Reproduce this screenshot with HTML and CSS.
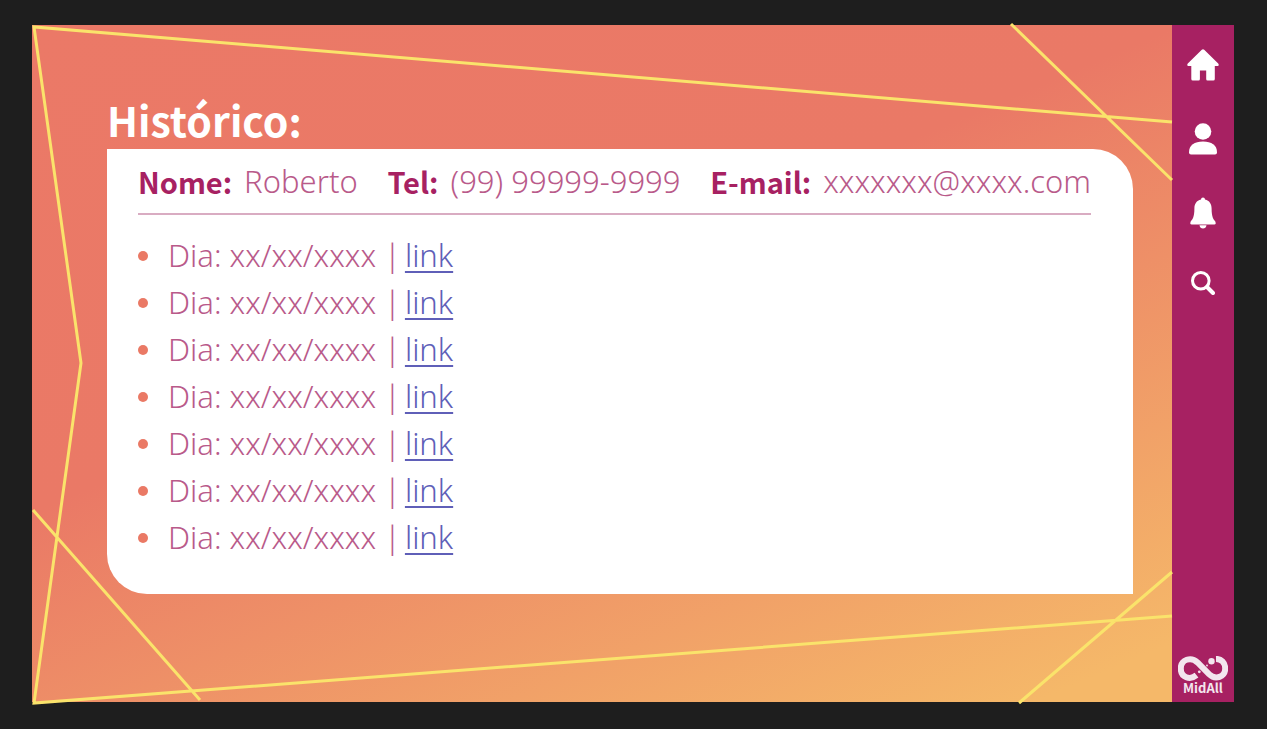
FILE: index.html
```html
<!DOCTYPE html>
<html lang="pt-BR">
<head>
  <meta charset="utf-8">
  <meta name="viewport" content="width=device-width, initial-scale=1">
  <title>MidAll – Histórico</title>
  <link rel="stylesheet" href="styles.css">
</head>
<body>
  <div class="app">
    <main class="content">
      <svg class="backdrop" viewBox="0 0 1140 677" preserveAspectRatio="none" aria-hidden="true">
        <path d="M1140 97 2 2 49 338 2 678 1140 591M979 -1 1140 155M1 485 168 675M987 678 1140 547"/>
      </svg>
      <h1 class="title">Histórico:</h1>
      <section class="card">
        <dl class="person">
          <div class="field"><dt>Nome:</dt><dd>Roberto</dd></div>
          <div class="field"><dt>Tel:</dt><dd>(99) 99999-9999</dd></div>
          <div class="field"><dt>E-mail:</dt><dd>xxxxxxx@xxxx.com</dd></div>
        </dl>
        <ul class="history">
          <li><span>Dia: xx/xx/xxxx |</span> <a href="#dia-1">link</a></li>
          <li><span>Dia: xx/xx/xxxx |</span> <a href="#dia-2">link</a></li>
          <li><span>Dia: xx/xx/xxxx |</span> <a href="#dia-3">link</a></li>
          <li><span>Dia: xx/xx/xxxx |</span> <a href="#dia-4">link</a></li>
          <li><span>Dia: xx/xx/xxxx |</span> <a href="#dia-5">link</a></li>
          <li><span>Dia: xx/xx/xxxx |</span> <a href="#dia-6">link</a></li>
          <li><span>Dia: xx/xx/xxxx |</span> <a href="#dia-7">link</a></li>
        </ul>
      </section>
    </main>
    <nav class="sidebar" aria-label="Menu">
      <div class="menu">
        <a class="item" href="#inicio" aria-label="Início">
          <svg viewBox="0 0 32 32" aria-hidden="true"><path d="M14.800 .8Q16 -.3 17.200 .8L31.200 14.500Q32.600 16.600 30.500 16.900H27.800V30Q27.800 31.500 26.300 31.500H20.500Q19.200 31.500 19.200 30V21.500H12.900V30Q12.900 31.500 11.600 31.500H5.800Q4.300 31.500 4.300 30V16.900H1.500Q-.6 16.600 .8 14.500Z"/></svg>
        </a>
        <a class="item" href="#perfil" aria-label="Perfil">
          <svg viewBox="0 0 32 32" aria-hidden="true"><circle cx="16" cy="8.500" r="8.300"/><path d="M2 29.500C2 22 7.500 18.600 16 18.600S30 22 30 29.500Q30 31.600 28 31.600H4Q2 31.600 2 29.500Z"/></svg>
        </a>
        <a class="item" href="#avisos" aria-label="Notificações">
          <svg viewBox="0 0 32 32" aria-hidden="true"><path d="M14 2.500a2 2 0 0 1 4 0C22.500 3.500 24.600 7 24.600 11.500 24.600 20 26.500 22.500 28.200 24.200Q29.600 27.500 27.300 27.500H4.700Q2.400 27.500 3.800 24.200C5.500 22.500 7.400 20 7.400 11.500 7.400 7 9.500 3.500 14 2.500ZM12.500 28.200H19.500Q18.900 31.500 16 31.500T12.500 28.200Z"/></svg>
        </a>
        <a class="item item-search" href="#buscar" aria-label="Buscar">
          <svg viewBox="0 0 24 24" aria-hidden="true"><circle cx="9.800" cy="9.800" r="8.300"/><path d="M16 16 22 22" stroke-width="4"/></svg>
        </a>
      </div>
      <a class="brand" href="#midall">
        <svg viewBox="0 0 50 25" aria-hidden="true">
          <path class="loop" d="M18.500 19.200C12 24.500 2.800 21.500 2.800 12.500 2.800 3.500 13 .2 19.500 6.500L31 18.200C37.500 24.500 47.200 21 47.200 12.500 47.200 6.500 43 2.800 38 2.900"/>
          <circle cx="33.500" cy="5.200" r="3.200"/><circle cx="29" cy="9.500" r=".9"/><circle cx="21.300" cy="15.800" r="1.400"/>
        </svg>
        <span>MidAll</span>
      </a>
    </nav>
  </div>
</body>
</html>
```
FILE: styles.css
```css
* {
  box-sizing: border-box;
}

body {
  margin: 0;
  min-height: 100vh;
  padding: 25px 33px 27px 32px;
  display: flex;
  background: #1e1e1e;
  font-family: "Noto Sans", sans-serif;
}

.app {
  flex: 1;
  display: flex;
}

.content {
  position: relative;
  flex: 1;
  padding: 68px 39px 68px 75px;
  background: linear-gradient(157deg, #eb7967 0%, #ea7966 42%, #f5b869 95%);
}

.backdrop {
  position: absolute;
  inset: 0;
  width: 100%;
  height: 100%;
  overflow: visible;
  fill: none;
  stroke: #fae36b;
  stroke-width: 3;
}

.title {
  position: relative;
  margin: 0;
  padding-bottom: 4px;
  color: #fff;
  font-family: "Noto Sans CJK JP", sans-serif;
  font-size: 41px;
  font-weight: 600;
  line-height: 52px;
}

.card {
  position: relative;
  padding: 8px 42px 33px 31px;
  border-radius: 0 40px 0 40px;
  background: #fff;
  color: #b95a8a;
  font-size: 31px;
  font-weight: 300;
}

.person {
  display: flex;
  flex-wrap: wrap;
  justify-content: space-between;
  margin: 0;
  padding-bottom: 8px;
  border-bottom: 2px solid #d9acc2;
  line-height: 48px;
}

.field {
  display: flex;
  gap: 12px;
}

.field dt {
  color: #a72162;
  font-family: "Noto Sans CJK JP", sans-serif;
  font-size: 29px;
  font-weight: 600;
}

.field dd {
  margin: 0;
}

.history {
  margin: 0;
  padding: 17px 0 0;
  list-style: none;
  line-height: 47px;
}

.history li {
  display: flex;
  align-items: center;
  gap: 4px;
}

.history li::before {
  content: "";
  width: 10px;
  height: 10px;
  margin-right: 16px;
  border-radius: 50%;
  background: #ea7965;
}

.history a {
  color: #5f5fb8;
  text-decoration: underline;
  text-decoration-thickness: 2px;
  text-underline-offset: 4px;
}

.sidebar {
  width: 62px;
  display: flex;
  flex-direction: column;
  justify-content: space-between;
  align-items: center;
  padding: 24px 0 7px;
  background: #a72162;
}

.menu {
  display: flex;
  flex-direction: column;
  align-items: center;
  gap: 42px;
}

.item svg {
  display: block;
  width: 32px;
  height: 32px;
  fill: #fff;
}

.item-search svg {
  width: 24px;
  height: 24px;
  fill: none;
  stroke: #fff;
  stroke-width: 3;
  stroke-linecap: round;
}

.brand {
  display: flex;
  flex-direction: column;
  align-items: center;
  color: #f3e6ee;
  font-family: "Noto Sans CJK JP", sans-serif;
  font-size: 13px;
  font-weight: 700;
  line-height: 14px;
  text-decoration: none;
}

.brand svg {
  width: 50px;
  height: 25px;
  fill: #f3e6ee;
}

.brand .loop {
  fill: none;
  stroke: #f3e6ee;
  stroke-width: 6;
}
```
